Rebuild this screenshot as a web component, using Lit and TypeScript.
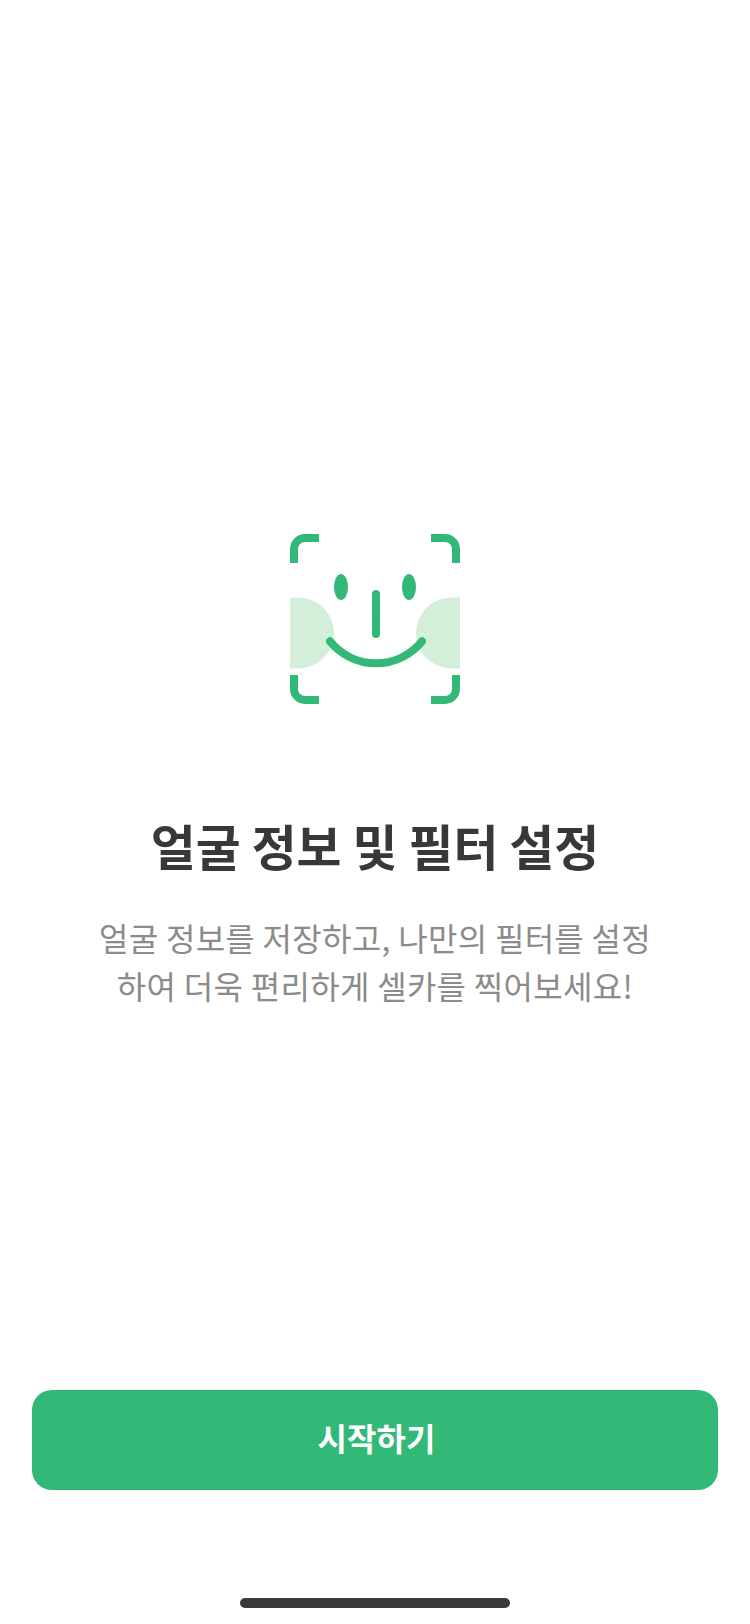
import { LitElement, html, css } from 'lit';
import { customElement } from 'lit/decorators.js';

@customElement('app-root')
export class AppRoot extends LitElement {
  static styles = css`
    :host {
      display: block;
      width: 750px;
      height: 1624px;
      background: #fff;
      font-family: 'Noto Sans CJK KR', 'Noto Sans', sans-serif;
    }

    .screen {
      display: flex;
      flex-direction: column;
      align-items: center;
      height: 100%;
      box-sizing: border-box;
      padding: 534px 32px 16px;
    }

    .face {
      display: block;
      width: 170px;
      height: 170px;
      flex: none;
    }

    h1 {
      margin: 109px 0 0;
      font-size: 48.8px;
      line-height: 64px;
      font-weight: 700;
      color: #383838;
      text-align: center;
    }

    p {
      margin: 36px 0 0;
      font-size: 32px;
      letter-spacing: 0.3px;
      line-height: 48px;
      font-weight: 400;
      color: #8b8b8b;
      text-align: center;
    }

    .start {
      margin-top: auto;
      width: 100%;
      height: 100px;
      flex: none;
      border: 0;
      border-radius: 20px;
      padding: 0 0 6px 3px;
      background: #33b977;
      color: #fff;
      font: inherit;
      font-size: 32px;
      font-weight: 700;
    }

    .home-bar {
      margin-top: 108px;
      width: 270px;
      height: 10px;
      flex: none;
      border-radius: 5px;
      background: #3a3a3a;
    }
  `;

  render() {
    return html`
      <div class="screen">
        <svg class="face" viewBox="0 0 170 170" fill="none">
          <path d="M0 63.5H8.5a35.5 35.5 0 0 1 0 71H0z" fill="#d3efd9" />
          <path d="M170 63.5H161.5a35.5 35.5 0 0 0 0 71H170z" fill="#d3efd9" />
          <g stroke="#33b977" stroke-width="8">
            <path d="M4 29V15A11 11 0 0 1 15 4H29" />
            <path d="M141 4H155A11 11 0 0 1 166 15V29" />
            <path d="M4 141V155A11 11 0 0 0 15 166H29" />
            <path d="M141 166H155A11 11 0 0 0 166 155V141" />
            <path d="M86 60V100" stroke-linecap="round" />
            <path d="M40 107.3A59 59 0 0 0 132 107.3" stroke-linecap="round" />
          </g>
          <ellipse cx="51" cy="53" rx="7" ry="13" fill="#33b977" />
          <ellipse cx="119" cy="53" rx="7" ry="13" fill="#33b977" />
        </svg>
        <h1>얼굴 정보 및 필터 설정</h1>
        <p>얼굴 정보를 저장하고, 나만의 필터를 설정<br />하여 더욱 편리하게 셀카를 찍어보세요!</p>
        <button class="start">시작하기</button>
        <div class="home-bar"></div>
      </div>
    `;
  }
}
